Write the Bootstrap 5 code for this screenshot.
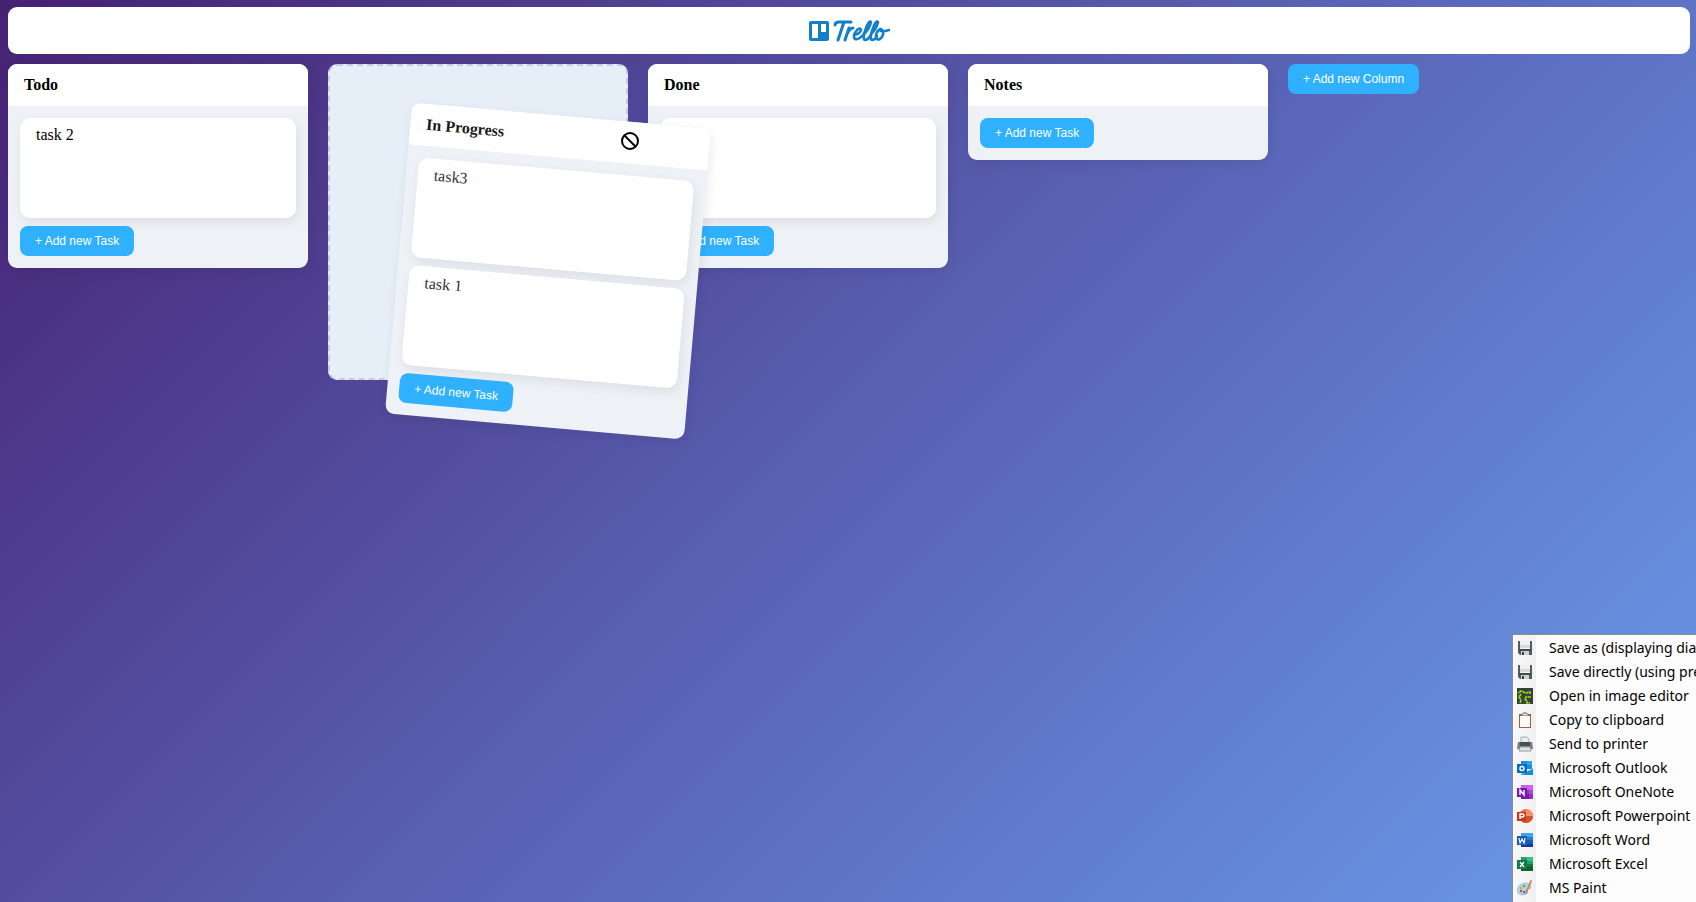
<!DOCTYPE html>
<html lang="en">
<head>
<meta charset="utf-8">
<meta name="viewport" content="width=device-width, initial-scale=1">
<title>Trello</title>
<link href="https://cdn.jsdelivr.net/npm/bootstrap@5.3.0/dist/css/bootstrap.min.css" rel="stylesheet">
<style>
  body {
    font-family: "Liberation Serif", "Times New Roman", serif;
    font-size: 16px;
    line-height: 18px;
    color: #000;
    background: linear-gradient(135deg, #462172 0%, #5961b3 50%, #6a9ceb 100%);
    padding: 7px 6px 0 8px;
    overflow: hidden;
  }
  .topbar { height: 47px; border-radius: 9px; margin-bottom: 10px; }
  .board { gap: 20px; }
  .lane-slot { width: 300px; }
  .lane {
    border-radius: 9px;
    overflow: hidden;
    background: #eef1f6;
    box-shadow: 2px 4px 12px rgba(0, 0, 0, .08);
  }
  .lane-title { font-size: 16px; line-height: 18px; padding: 12px 16px; }
  .lane-body { padding: 12px; gap: 8px; }
  .task {
    height: 100px;
    padding: 8px 16px;
    border-radius: 10px;
    box-shadow: 2px 4px 12px rgba(0, 0, 0, .08);
  }
  .add-btn {
    --bs-btn-bg: #30b1ff;
    --bs-btn-color: #fff;
    --bs-btn-hover-bg: #1da3f5;
    --bs-btn-hover-color: #fff;
    --bs-btn-border-width: 0;
    --bs-btn-border-radius: 8px;
    --bs-btn-font-size: 12px;
    --bs-btn-line-height: 14px;
    --bs-btn-padding-x: 15px;
    --bs-btn-padding-y: 8px;
    font-family: "Liberation Sans", Arial, sans-serif;
    white-space: nowrap;
  }
  .drop-zone {
    height: 316px;
    border: 2px dashed #c9c9e2;
    border-radius: 9px;
    background: #e6eef8;
  }
  .dragging {
    position: absolute;
    top: 51px;
    left: 70px;
    width: 300px;
    transform: rotate(5deg);
    z-index: 5;
  }
  .dragging .task { color: #333; }
  .dragging .lane-title { color: #1a1a1a; }
  .no-drop { position: absolute; top: 67px; left: 292px; z-index: 6; }
  .context-menu {
    position: fixed;
    right: 0;
    bottom: 0;
    width: 184px;
    height: 268px;
    overflow: hidden;
    padding-top: 1px;
    border: 1px solid #8b8b8b;
    border-right: 0;
    border-bottom: 0;
    background: linear-gradient(90deg, #f8f8f8 0, #f0f0f0 23px, #fdfdfd 23px);
    font-family: "Noto Sans", "Segoe UI", sans-serif;
    font-size: 14px;
    z-index: 10;
  }
  .menu-row {
    display: flex;
    align-items: center;
    gap: 16px;
    height: 24px;
    padding: 0 0 0 4px;
    border: 0;
    background: none;
    color: #000;
    line-height: 20px;
    white-space: nowrap;
  }
  .menu-row svg { flex: none; }
</style>
</head>
<body class="min-vh-100">
<header class="topbar bg-white d-flex justify-content-center align-items-center">
  <a href="#" aria-label="Trello" class="d-flex">
    <svg width="86" height="30" viewBox="-2 0 86 30" fill="none">
      <path fill="#1180c8" fill-rule="evenodd" d="M3 5h16a2 2 0 0 1 2 2v16a2 2 0 0 1-2 2H3a2 2 0 0 1-2-2V7a2 2 0 0 1 2-2zm1 3v14h6V8zm9 0v8h5V8z"/>
      <g stroke="#1180c8" stroke-width="3" stroke-linecap="round" stroke-linejoin="round">
        <path d="M27 9q0-3 4-3h12M36 6l-6 18"/>
        <path d="M41 12l-4 12M39 18q3-6 6-6"/>
        <path stroke-width="2.600" d="M46 19q6-1 7-5-1-3-4 0-5 6-2 9 4 1 9-5"/>
        <path stroke-width="2.600" d="M56 18q6-6 7-12-2-2-5 6-4 11-1 12 3 0 6-5"/>
        <path stroke-width="2.600" d="M63 18q6-6 7-12-2-2-5 6-4 11-1 12 3 0 5-4"/>
        <path stroke-width="2.600" d="M73 13q-4 1-5 6 0 6 4 4 4-3 3-8-1-2-3-2 0 4 9 1"/>
      </g>
    </svg>
  </a>
</header>

<main class="board d-flex align-items-start">
  <section class="lane-slot flex-shrink-0">
    <div class="lane">
      <h2 class="lane-title fw-bold bg-white m-0">Todo</h2>
      <div class="lane-body d-flex flex-column align-items-start">
        <div class="task bg-white w-100">task 2</div>
        <button type="button" class="btn add-btn">+ Add new Task</button>
      </div>
    </div>
  </section>

  <section class="lane-slot flex-shrink-0 position-relative z-2">
    <div class="drop-zone"></div>
    <div class="lane dragging">
      <h2 class="lane-title fw-bold bg-white m-0">In Progress</h2>
      <div class="lane-body d-flex flex-column align-items-start">
        <div class="task bg-white w-100">task3</div>
        <div class="task bg-white w-100">task 1</div>
        <button type="button" class="btn add-btn">+ Add new Task</button>
      </div>
    </div>
    <svg class="no-drop" width="20" height="20" viewBox="0 0 20 20" fill="none">
      <circle cx="10" cy="10" r="8" stroke="#fff" stroke-width="4"/>
      <path d="M4 4l12 12" stroke="#fff" stroke-width="4"/>
      <circle cx="10" cy="10" r="8" stroke="#000" stroke-width="2"/>
      <path d="M4 4l12 12" stroke="#000" stroke-width="2"/>
    </svg>
  </section>

  <section class="lane-slot flex-shrink-0">
    <div class="lane">
      <h2 class="lane-title fw-bold bg-white m-0">Done</h2>
      <div class="lane-body d-flex flex-column align-items-start">
        <div class="task bg-white w-100"></div>
        <button type="button" class="btn add-btn">+ Add new Task</button>
      </div>
    </div>
  </section>

  <section class="lane-slot flex-shrink-0">
    <div class="lane">
      <h2 class="lane-title fw-bold bg-white m-0">Notes</h2>
      <div class="lane-body d-flex flex-column align-items-start">
        <button type="button" class="btn add-btn">+ Add new Task</button>
      </div>
    </div>
  </section>

  <button type="button" class="btn add-btn flex-shrink-0">+ Add new Column</button>
</main>

<svg class="d-none">
  <symbol id="floppy" viewBox="0 0 16 16">
    <path d="M1 1h14v14H3l-2-2z" fill="#555a5e"/>
    <path d="M3 1h10v8H3z" fill="#eef1f2"/><path d="M3 5h10v3H3z" fill="#d5dadb"/>
    <path d="M2 9h12v2H2z" fill="#44494c"/>
    <path d="M4 11h8v4H4z" fill="#cdd2d4"/><path d="M5 12h2v3H5z" fill="#3b4044"/>
  </symbol>
</svg>

<nav class="context-menu" aria-label="Capture destinations">
  <button type="button" class="menu-row"><svg width="16" height="16"><use href="#floppy"/></svg>Save as (displaying dialog)</button>
  <button type="button" class="menu-row"><svg width="16" height="16"><use href="#floppy"/></svg>Save directly (using preferred file output settings)</button>
  <button type="button" class="menu-row">
    <svg width="16" height="16" viewBox="0 0 16 16"><path fill="#3d3d3d" d="M0 0h16v16H0z"/><path fill="none" stroke="#86f000" stroke-width="1.600" stroke-dasharray="3 .5" d="M13 6V4L9 5 4 3 1 5M4 6L2 9l2 3-1 3M14 9H9l-1 2 2 2v2h3"/></svg>Open in image editor</button>
  <button type="button" class="menu-row">
    <svg width="16" height="16" viewBox="0 0 16 16"><path fill="#a3603f" d="M2 2h12v14H2z"/><path fill="#fafafa" d="M3 4h10v11H3z"/><path fill="#999fa3" d="M5 1h1l1-1h2l1 1h1v3H5z"/><path fill="#e2e4e5" d="M6 2h4v1H6z"/></svg>Copy to clipboard</button>
  <button type="button" class="menu-row">
    <svg width="16" height="16" viewBox="0 0 16 16"><path fill="#e7eaec" stroke="#a8afb4" d="M4 7V1h6l2 2v4"/><path fill="#75797c" d="M1 6h14l1 7H0z"/><path fill="#4a4e50" d="M3 6h10v4H3z"/><path fill="#d9eadf" stroke="#969ca0" d="M3 11h10l1 4H2z"/></svg>Send to printer</button>
  <button type="button" class="menu-row">
    <svg width="16" height="16" viewBox="0 0 16 16"><path fill="#1490df" d="M4 1h11v8H4z"/><path fill="#28a8ea" d="M10 1h5v4h-5z"/><path fill="#50d9ff" d="M4 15V9l6 2 6-3v7z"/><path fill="#198ad8" d="M4 15l12-6v6z"/><path fill="#0f6cbd" d="M0 4h10v9H0z"/><circle cx="5" cy="8.500" r="2" fill="none" stroke="#fff" stroke-width="1.400"/></svg>Microsoft Outlook</button>
  <button type="button" class="menu-row">
    <svg width="16" height="16" viewBox="0 0 16 16"><path fill="#ca64ea" d="M4 1h12v5H4z"/><path fill="#ae4bd5" d="M12 6h4v4h-4z"/><path fill="#9332bf" d="M4 6h8v4H4zM12 10h4v5h-4z"/><path fill="#7719aa" d="M4 10h8v5H4zM0 4h10v9H0z"/><path stroke="#fff" stroke-width="1.400" fill="none" d="M3 11V6l4 5V6"/></svg>Microsoft OneNote</button>
  <button type="button" class="menu-row">
    <svg width="16" height="16" viewBox="0 0 16 16"><circle cx="9" cy="8" r="7" fill="#ed6c47"/><path fill="#ff8f6b" d="M9 1a7 7 0 0 1 7 7H9z"/><path fill="#d35230" d="M2 8h14a7 7 0 0 1-14 0z"/><path fill="#c13b1b" d="M0 4h9v9H0z"/><path stroke="#fff" stroke-width="1.400" fill="none" d="M3 11V6h2q2 0 2 1.500T5 9H3"/></svg>Microsoft Powerpoint</button>
  <button type="button" class="menu-row">
    <svg width="16" height="16" viewBox="0 0 16 16"><path fill="#41a5ee" d="M4 1h12v4H4z"/><path fill="#2b7cd3" d="M4 5h12v3H4z"/><path fill="#185abd" d="M4 8h12v4H4z"/><path fill="#103f91" d="M4 12h12v3H4z"/><path fill="#185abd" d="M0 4h10v9H0z"/><path stroke="#fff" stroke-width="1.200" fill="none" d="M2 6l1 5 2-4 2 4 1-5"/></svg>Microsoft Word</button>
  <button type="button" class="menu-row">
    <svg width="16" height="16" viewBox="0 0 16 16"><path fill="#21a366" d="M4 1h6v7H4z"/><path fill="#33c481" d="M10 1h6v4h-6z"/><path fill="#21a366" d="M10 5h6v3h-6z"/><path fill="#107c41" d="M10 8h6v3h-6z"/><path fill="#185c37" d="M4 8h6v3h6v4H4z"/><path fill="#107c41" d="M0 4h10v9H0z"/><path stroke="#fff" stroke-width="1.400" fill="none" d="M3 6l4 5M7 6l-4 5"/></svg>Microsoft Excel</button>
  <button type="button" class="menu-row">
    <svg width="16" height="16" viewBox="0 0 16 16"><path fill="#b5d3e6" stroke="#8fb0c6" stroke-width=".6" d="M8 3q6 0 6 4 0 2-3 2-1 1 0 3-1 3-5 3-6 0-6-5 1-6 8-7z"/><circle cx="4" cy="8" r="1.200" fill="#f0a030"/><circle cx="7" cy="6" r="1.200" fill="#55a845"/><circle cx="4" cy="11" r="1.200" fill="#d8453b"/><circle cx="7" cy="12" r="1.200" fill="#3c74c8"/><path stroke="#c4864c" stroke-width="1.800" stroke-linecap="round" d="M14 1L9 13"/></svg>MS Paint</button>
</nav>
<script src="https://cdn.jsdelivr.net/npm/bootstrap@5.3.0/dist/js/bootstrap.bundle.min.js"></script>
</body>
</html>
